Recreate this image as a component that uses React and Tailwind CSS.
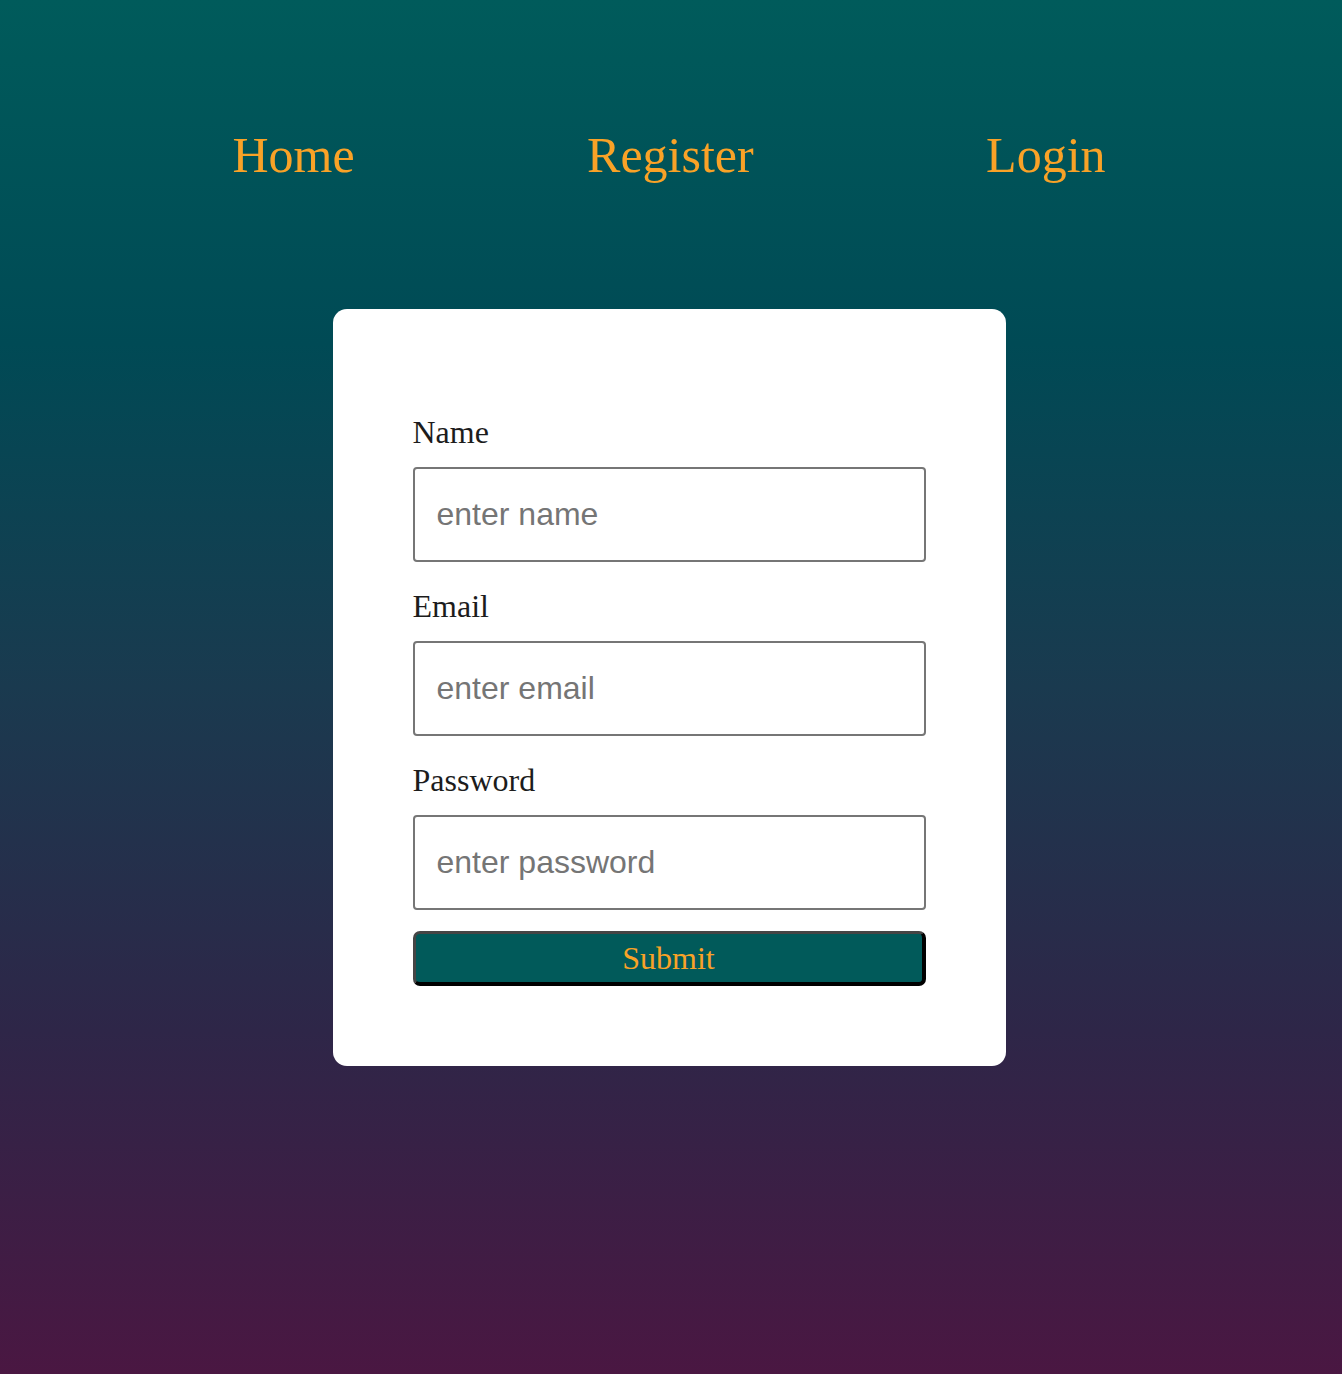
import React from 'react';

const serif = "font-['Liberation_Serif','Times_New_Roman',serif]";

function Field({ label, type, placeholder }) {
  return (
    <div className="flex flex-col">
      <label className={`${serif} text-[32px] leading-[35px] text-[#1c1c1c]`}>{label}</label>
      <input
        type={type}
        placeholder={placeholder}
        className="mt-[17px] h-[95px] w-full rounded-[4px] border-2 border-[#767676] bg-white px-[22px] font-['Liberation_Sans',Arial,sans-serif] text-[32px] text-[#222] placeholder:text-[#757575] outline-none"
      />
    </div>
  );
}

export default function App() {
  return (
    <div className="min-h-screen bg-[linear-gradient(180deg,#005b5b_0%,#004a55_25%,#1a3a4f_50%,#2e2648_75%,#4a1742_100%)]">
      <nav className={`${serif} flex justify-evenly pt-[127px] pr-[4px] text-[50px] leading-[57px] text-[#f9a227]`}>
        <a href="#">Home</a>
        <a href="#">Register</a>
        <a href="#">Login</a>
      </nav>
      <div className="mt-[125px] flex justify-center pr-[4px]">
        <div className="w-[673px] rounded-[14px] bg-white px-[80px] pt-[106px] pb-[80px]">
          <form className="flex flex-col gap-[27px]" onSubmit={(e) => e.preventDefault()}>
            <Field label="Name" type="text" placeholder="enter name" />
            <Field label="Email" type="email" placeholder="enter email" />
            <div className="flex flex-col">
              <Field label="Password" type="password" placeholder="enter password" />
              <button
                type="submit"
                className={`${serif} mt-[21px] h-[55px] w-full rounded-[7px] border-t-[3px] border-l-[3px] border-r-[4px] border-b-[4px] border-t-[#454545] border-l-[#454545] border-r-black border-b-black bg-[#015a5a] text-[32px] leading-none text-[#f9a227]`}
              >
                Submit
              </button>
            </div>
          </form>
        </div>
      </div>
    </div>
  );
}
